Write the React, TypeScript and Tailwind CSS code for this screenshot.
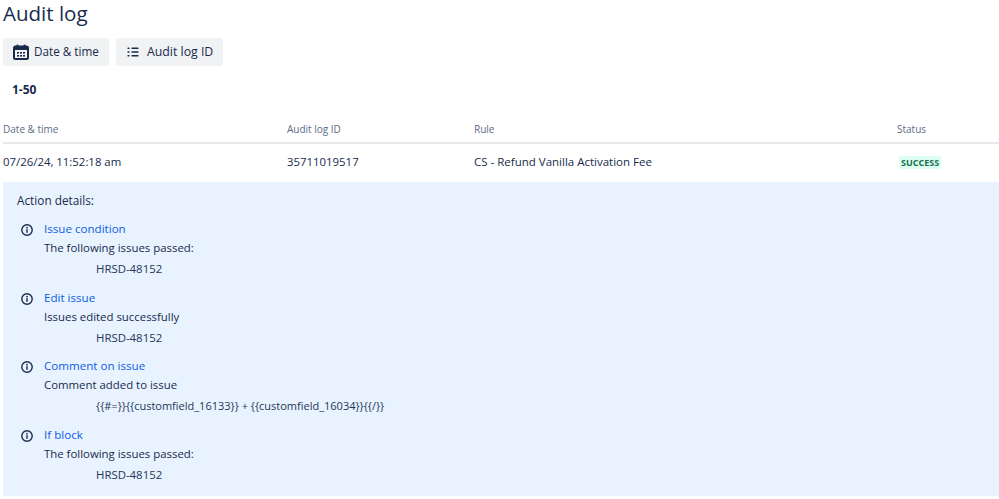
const FONT = "font-['Open_Sans','Noto_Sans',sans-serif]";

function CalendarIcon() {
  return (
    <svg width="16" height="16" viewBox="0 0 16 16" className="text-[#172b4d]">
      <rect x="1" y="2.5" width="14" height="12.5" rx="1.5" fill="none" stroke="currentColor" strokeWidth="2" />
      <rect x="1" y="2.5" width="14" height="3.5" fill="currentColor" />
      <rect x="3.5" y="0.5" width="2" height="3.5" rx="1" fill="currentColor" />
      <rect x="10.5" y="0.5" width="2" height="3.5" rx="1" fill="currentColor" />
      <g fill="currentColor">
        <rect x="4" y="8" width="2" height="1.6" />
        <rect x="7" y="8" width="2" height="1.6" />
        <rect x="10" y="8" width="2" height="1.6" />
        <rect x="4" y="11" width="2" height="1.6" />
        <rect x="7" y="11" width="2" height="1.6" />
        <rect x="10" y="11" width="2" height="1.6" />
      </g>
    </svg>
  );
}

function ListIcon() {
  return (
    <svg width="12" height="10" viewBox="0 0 12 10" className="text-[#172b4d]">
      <g fill="currentColor">
        <rect x="0.5" y="0.5" width="2" height="1.6" rx="0.4" />
        <rect x="0.5" y="4.2" width="2" height="1.6" rx="0.4" />
        <rect x="0.5" y="7.9" width="2" height="1.6" rx="0.4" />
        <rect x="4.5" y="0.5" width="7" height="1.6" rx="0.4" />
        <rect x="4.5" y="4.2" width="7" height="1.6" rx="0.4" />
        <rect x="4.5" y="7.9" width="7" height="1.6" rx="0.4" />
      </g>
    </svg>
  );
}

function InfoIcon() {
  return (
    <svg width="12" height="12" viewBox="0 0 12 12" className="shrink-0 text-[#172b4d]">
      <circle cx="6" cy="6" r="5.2" fill="none" stroke="currentColor" strokeWidth="1.4" />
      <rect x="5.3" y="5.2" width="1.4" height="3.6" fill="currentColor" />
      <circle cx="6" cy="3.7" r="0.85" fill="currentColor" />
    </svg>
  );
}

const actions = [
  { title: "Issue condition", message: "The following issues passed:", detail: "HRSD-48152" },
  { title: "Edit issue", message: "Issues edited successfully", detail: "HRSD-48152" },
  {
    title: "Comment on issue",
    message: "Comment added to issue",
    detail: "{{#=}}{{customfield_16133}} + {{customfield_16034}}{{/}}",
    long: true,
  },
  { title: "If block", message: "The following issues passed:", detail: "HRSD-48152" },
];

export default function App() {
  return (
    <div className={`${FONT} h-[499px] w-[999px] overflow-hidden bg-white pl-[3px] text-[12px] text-[#172b4d]`}>
      <h1 className="h-[38px] text-[20.5px] leading-[26px] font-normal">Audit log</h1>

      <div className="flex gap-[7px]">
        <button className="flex h-[28px] w-[106px] items-center gap-[5px] rounded-[3px] bg-[#f1f2f4] pl-[10px]">
          <CalendarIcon />
          <span className="text-[11.7px]">Date &amp; time</span>
        </button>
        <button className="flex h-[28px] w-[107px] items-center gap-[8px] rounded-[3px] bg-[#f1f2f4] pl-[11px]">
          <ListIcon />
          <span className="text-[12.3px]">Audit log ID</span>
        </button>
      </div>

      <p className="mt-[15px] pl-[9px] leading-[17px] font-bold">1-50</p>

      <div className="mt-[18px] grid h-[28px] grid-cols-[284px_187px_423px_1fr] border-b-2 border-[#e6e8ec] pt-[6px] text-[10px] leading-[15px] text-[#5e6c84]">
        <span>Date &amp; time</span>
        <span>Audit log ID</span>
        <span>Rule</span>
        <span>Status</span>
      </div>

      <div className="grid h-[38px] grid-cols-[284px_187px_423px_1fr] items-center pb-[2px] text-[11.4px]">
        <span>07/26/24, 11:52:18 am</span>
        <span>35711019517</span>
        <span className="text-[11.5px]">CS - Refund Vanilla Activation Fee</span>
        <span>
          <span className="ml-[2px] inline-block rounded-[3px] bg-[#dcfff1] px-[2px] text-[9px] leading-[13px] font-bold text-[#216e4e]">
            SUCCESS
          </span>
        </span>
      </div>

      <div className="h-[314px] bg-[#e9f2ff] pt-[10px] pl-[14px]">
        <p className="text-[11.8px] leading-[17px]">Action details:</p>
        <div className="mt-[10px] flex flex-col gap-[9.7px]">
          {actions.map((a) => (
            <div key={a.title} className="flex gap-[11px] pl-[4px]">
              <div className="pt-[5px]">
                <InfoIcon />
              </div>
              <div className="text-[11.4px] leading-[19px]">
                <p className="text-[11.6px] text-[#0c5ee0]">{a.title}</p>
                <p>{a.message}</p>
                <p className={a.long ? "pt-[2px] pl-[52px] text-[11px] text-[#253858]" : "pt-[2px] pl-[52px] text-[#253858]"}>
                  {a.detail}
                </p>
              </div>
            </div>
          ))}
        </div>
      </div>
    </div>
  );
}
